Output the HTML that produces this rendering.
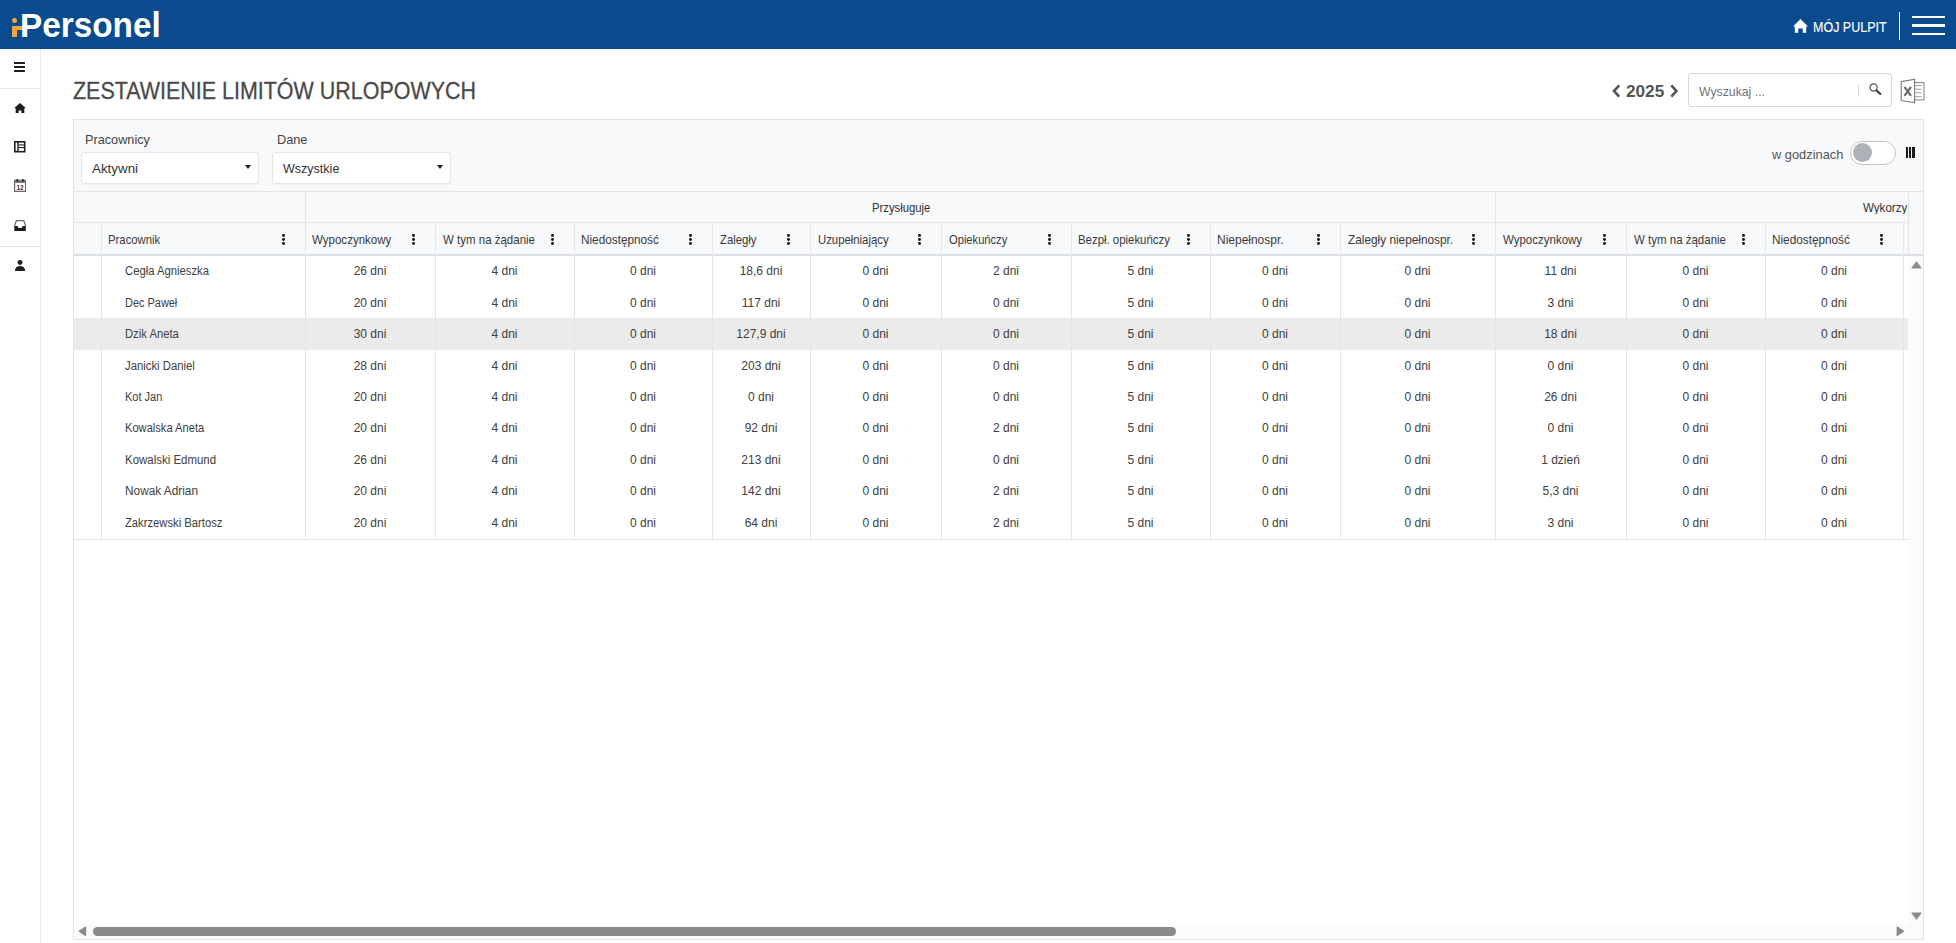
<!DOCTYPE html><html><head><meta charset="utf-8"><style>
*{margin:0;padding:0;box-sizing:border-box}
html,body{width:1956px;height:943px;overflow:hidden;background:#fff;font-family:"Liberation Sans",sans-serif;position:relative}
.a{position:absolute}
.t{position:absolute;white-space:nowrap;line-height:1;transform-origin:0 0}
.c{position:absolute;white-space:nowrap;line-height:1;text-align:center;font-size:12px;color:#404040}
.hl{position:absolute;height:1px;background:#e3e5e8}
.vl{position:absolute;width:1px;background:#e3e5e8}
.kb{position:absolute;width:3px;height:11px}
.kb i{position:absolute;left:0;width:2.8px;height:2.8px;border-radius:50%;background:#181818}

</style></head><body>
<div class="a" style="left:0;top:0;width:1956px;height:48.5px;background:#0a4a8e"></div>
<div class="a" style="left:12.3px;top:18.3px;width:5px;height:5px;border-radius:50%;background:#f0a540"></div>
<div class="a" style="left:12px;top:26px;width:5.2px;height:10.8px;background:#f0a540"></div>
<div class="a" style="left:12px;top:26px;width:10.5px;height:4.4px;background:#f0a540"></div>
<div class="t" id="logo" style="left:20.15px;top:9.70px;font-size:32.5px;font-weight:bold;color:#fff;transform:scaleX(1.0251);">P<span style="display:inline-block;transform:scaleY(1.08);transform-origin:50% 27.5px">ersonel</span></div>
<svg class="a" style="left:1793px;top:19px" width="15" height="14" viewBox="0 0 15 14"><path d="M7.5 0 L15 7.4 L13.2 7.4 L13.2 13.8 L9.8 13.8 L9.8 9.5 L5.2 9.5 L5.2 13.8 L1.8 13.8 L1.8 7.4 L0 7.4 Z" fill="#fff"/></svg>
<div class="t" id="pulpit" style="left:1812.69px;top:18.51px;font-size:15.4px;color:#fff;transform:scaleX(0.8122);-webkit-text-stroke:0.15px #fff;">MÓJ PULPIT</div>
<div class="a" style="left:1899px;top:12px;width:1.2px;height:28px;background:#fff"></div>
<div class="a" style="left:1912.3px;top:16.2px;width:32.5px;height:2.3px;background:#fff"></div>
<div class="a" style="left:1912.3px;top:24.4px;width:32.5px;height:2.3px;background:#fff"></div>
<div class="a" style="left:1912.3px;top:32.5px;width:32.5px;height:2.3px;background:#fff"></div>
<div class="a" style="left:39.5px;top:48.5px;width:1.2px;height:895px;background:#e8e8e8"></div>
<div class="a" style="left:0;top:88px;width:40px;height:1px;background:#e8e8e8"></div>
<div class="a" style="left:0;top:246px;width:40px;height:1px;background:#e8e8e8"></div>
<div class="a" style="left:14px;top:61.7px;width:11.3px;height:2.4px;background:#1e1e1e;border-radius:0.5px"></div>
<div class="a" style="left:14px;top:65.8px;width:11.3px;height:2.4px;background:#1e1e1e;border-radius:0.5px"></div>
<div class="a" style="left:14px;top:69.9px;width:11.3px;height:2.4px;background:#1e1e1e;border-radius:0.5px"></div>
<svg class="a" style="left:13.5px;top:102.5px" width="12" height="10.5" viewBox="0 0 12 10.5"><path d="M6 0 L12 5.3 L10.3 5.3 L10.3 10.5 L7.3 10.5 L7.3 7.6 L4.7 7.6 L4.7 10.5 L1.7 10.5 L1.7 5.3 L0 5.3 Z" fill="#1e1e1e"/></svg>
<svg class="a" style="left:14px;top:141.3px" width="11.5" height="11.5" viewBox="0 0 11.5 11.5"><rect x="0.8" y="0.8" width="9.9" height="9.9" fill="none" stroke="#1e1e1e" stroke-width="1.6"/><rect x="3.3" y="0.8" width="1.4" height="10" fill="#1e1e1e"/><rect x="4.5" y="3.4" width="6" height="1.1" fill="#1e1e1e"/><rect x="4.5" y="6" width="6" height="1.1" fill="#1e1e1e"/></svg>
<svg class="a" style="left:13.8px;top:179px" width="12.2" height="13" viewBox="0 0 12.2 13"><rect x="0.6" y="1.4" width="11" height="11" fill="none" stroke="#666" stroke-width="1.2"/><rect x="0.6" y="1.4" width="11" height="2.6" fill="#777"/><rect x="2.3" y="0" width="1.9" height="2.6" rx="0.9" fill="#222"/><rect x="8" y="0" width="1.9" height="2.6" rx="0.9" fill="#222"/><rect x="1.2" y="4" width="9.8" height="0.8" fill="#fff"/><text x="6.1" y="10.8" font-size="6.5" font-weight="bold" text-anchor="middle" fill="#333" font-family="Liberation Sans">12</text></svg>
<svg class="a" style="left:13.8px;top:219.5px" width="12.2" height="11.8" viewBox="0 0 12.2 11.8"><path d="M2.3 0.7 L9.9 0.7 L11.5 5.5 L11.5 11.2 L0.7 11.2 L0.7 5.5 Z" fill="none" stroke="#6a6a6a" stroke-width="1.2" stroke-linejoin="round"/><path d="M0.7 6 L3.4 6 L4.6 8 L7.6 8 L8.8 6 L11.5 6 L11.5 11.8 L0.7 11.8 Z" fill="#1c1c1c"/></svg>
<svg class="a" style="left:14.6px;top:259.6px" width="10.2" height="11.3" viewBox="0 0 10.2 11.3"><circle cx="5.1" cy="2.5" r="2.5" fill="#1e1e1e"/><path d="M0 11.3 Q0 5.9 5.1 5.9 Q10.2 5.9 10.2 11.3 Z" fill="#1e1e1e"/></svg>
<div class="t" id="title" style="left:73.30px;top:79.81px;font-size:23.6px;color:#4a4a4a;transform:scaleX(0.9095);-webkit-text-stroke:0.3px #4a4a4a;">ZESTAWIENIE LIMITÓW URLOPOWYCH</div>
<svg class="a" style="left:1610.5px;top:83.5px" width="10.5" height="14" viewBox="0 0 10.5 14"><path d="M8.2 1.3 L3 7 L8.2 12.7" fill="none" stroke="#555" stroke-width="2.6"/></svg>
<div class="t" id="year" style="left:1625.80px;top:83.71px;font-size:16.8px;font-weight:bold;color:#555;transform:scaleX(1.0244);">2025</div>
<svg class="a" style="left:1668.5px;top:83.5px" width="10.5" height="14" viewBox="0 0 10.5 14"><path d="M2.3 1.3 L7.5 7 L2.3 12.7" fill="none" stroke="#555" stroke-width="2.6"/></svg>
<div class="a" style="left:1688.3px;top:73px;width:203.3px;height:33.8px;border:1px solid #d6d6d6;border-radius:3.5px;background:#fff"></div>
<div class="t" id="search" style="left:1698.90px;top:85.20px;font-size:13.4px;color:#6f7479;transform:scaleX(0.9154);">Wyszukaj ...</div>
<div class="a" style="left:1858px;top:84px;width:1px;height:12.5px;background:#dcdcdc"></div>
<svg class="a" style="left:1869px;top:83px" width="13" height="12" viewBox="0 0 13 12"><circle cx="4.6" cy="4.5" r="3.6" fill="none" stroke="#555" stroke-width="1.2"/><path d="M7.3 7.3 L11.4 10.9" stroke="#333" stroke-width="2" stroke-linecap="round"/></svg>
<svg class="a" style="left:1899.5px;top:77.5px" width="25" height="26" viewBox="0 0 25 26"><path d="M1.2 3.6 L14.6 1.2 L14.6 24.8 L1.2 22.5 Z" fill="#fff" stroke="#777" stroke-width="1.1" stroke-linejoin="round"/><path d="M14.6 4.6 H24 V21.9 H14.6" fill="none" stroke="#7a7a7a" stroke-width="1"/><path d="M15.2 7.6 H21.6 M15.2 11.2 H21.6 M15.2 14.7 H21.6 M15.2 18.7 H21.6" stroke="#888" stroke-width="0.8"/><path d="M4.4 8.8 L11 17.8 M11 8.8 L4.4 17.8" stroke="#6a6a6a" stroke-width="2.1"/></svg>
<div class="a" style="left:73px;top:119px;width:1851px;height:821px;border:1px solid #e3e4e6;background:#fff"></div>
<div class="a" style="left:74px;top:924px;width:1834px;height:15px;background:#fbfbfb"></div>
<div class="a" style="left:1908px;top:255px;width:15px;height:684px;background:#fbfbfb"></div>
<div class="a" style="left:74px;top:120px;width:1849px;height:71px;background:#f8f9fa"></div>
<div class="t" id="lab1" style="left:84.71px;top:133.91px;font-size:12.9px;color:#444;transform:scaleX(0.9853);">Pracownicy</div>
<div class="t" id="lab2" style="left:276.81px;top:133.91px;font-size:12.9px;color:#444;transform:scaleX(0.9883);">Dane</div>
<div class="a" style="left:81px;top:152.4px;width:178px;height:31.4px;border:1px solid #e6e6e6;border-radius:3px;background:#fff;box-shadow:0 0.5px 1px rgba(0,0,0,0.04)"></div>
<div class="t" id="sel1" style="left:91.90px;top:163.11px;font-size:12.9px;color:#333;transform:scaleX(1.0379);">Aktywni</div>
<div class="a" style="left:244.7px;top:165.2px;width:0;height:0;border-left:3.2px solid transparent;border-right:3.2px solid transparent;border-top:4.8px solid #1e1e1e"></div>
<div class="a" style="left:272.4px;top:152.4px;width:178.2px;height:31.4px;border:1px solid #e6e6e6;border-radius:3px;background:#fff;box-shadow:0 0.5px 1px rgba(0,0,0,0.04)"></div>
<div class="t" id="sel2" style="left:283.30px;top:163.11px;font-size:12.9px;color:#333;transform:scaleX(0.9717);">Wszystkie</div>
<div class="a" style="left:436.6px;top:165.2px;width:0;height:0;border-left:3.2px solid transparent;border-right:3.2px solid transparent;border-top:4.8px solid #1e1e1e"></div>
<div class="t" id="wgodz" style="left:1772.30px;top:149.00px;font-size:12.9px;color:#555;transform:scaleX(0.9960);">w godzinach</div>
<div class="a" style="left:1850.2px;top:140.8px;width:45.6px;height:24px;border:1px solid #c5c5c5;border-radius:12px;background:#fff"></div>
<div class="a" style="left:1852.7px;top:143.3px;width:19px;height:19px;border-radius:50%;background:#adb2b9"></div>
<div class="a" style="left:1905.6px;top:146.5px;width:2.4px;height:11.2px;background:#1a1a1a"></div>
<div class="a" style="left:1909px;top:146.5px;width:2.4px;height:11.2px;background:#1a1a1a"></div>
<div class="a" style="left:1912.4px;top:146.5px;width:2.4px;height:11.2px;background:#1a1a1a"></div>
<div class="a" style="left:74px;top:318px;width:1834px;height:31.5px;background:#ebebeb"></div>
<div class="a" style="left:74px;top:191px;width:1849px;height:64px;background:#f8f9fa"></div>
<div class="hl" style="left:74px;top:191px;width:1849px"></div>
<div class="hl" style="left:74px;top:222px;width:1834px"></div>
<div class="a" style="left:74px;top:254px;width:1849px;height:1.6px;background:#dcdfe2"></div>
<div class="vl" style="left:1908px;top:191px;height:64px"></div>
<div class="vl" style="left:305px;top:191px;height:31px"></div>
<div class="vl" style="left:1495px;top:191px;height:31px"></div>
<div class="t" id="grp1" style="left:871.60px;top:201.82px;font-size:12px;color:#333;transform:scaleX(0.9398);">Przysługuje</div>
<div class="t" id="grp2" style="left:1863.00px;top:201.82px;font-size:12px;color:#333;transform:scaleX(0.9650);width:45.80px;overflow:hidden;">Wykorzystane</div>
<div class="vl" style="left:101px;top:222px;height:317px"></div>
<div class="t" id="h0" style="left:108.09px;top:233.91px;font-size:12.4px;color:#3a3a3a;transform:scaleX(0.9147);">Pracownik</div>
<div class="kb" style="left:281.8px;top:234px"><i style="top:0"></i><i style="top:4.1px"></i><i style="top:8.2px"></i></div>
<div class="vl" style="left:305px;top:222px;height:317px"></div>
<div class="t" id="h1" style="left:312.30px;top:233.91px;font-size:12.4px;color:#3a3a3a;transform:scaleX(0.9306);">Wypoczynkowy</div>
<div class="kb" style="left:412.3px;top:234px"><i style="top:0"></i><i style="top:4.1px"></i><i style="top:8.2px"></i></div>
<div class="vl" style="left:435px;top:222px;height:317px"></div>
<div class="t" id="h2" style="left:443.00px;top:233.91px;font-size:12.4px;color:#3a3a3a;transform:scaleX(0.9277);">W tym na żądanie</div>
<div class="kb" style="left:551.3000000000001px;top:234px"><i style="top:0"></i><i style="top:4.1px"></i><i style="top:8.2px"></i></div>
<div class="vl" style="left:574px;top:222px;height:317px"></div>
<div class="t" id="h3" style="left:580.85px;top:233.91px;font-size:12.4px;color:#3a3a3a;transform:scaleX(0.9496);">Niedostępność</div>
<div class="kb" style="left:689.3000000000001px;top:234px"><i style="top:0"></i><i style="top:4.1px"></i><i style="top:8.2px"></i></div>
<div class="vl" style="left:712px;top:222px;height:317px"></div>
<div class="t" id="h4" style="left:720.00px;top:233.91px;font-size:12.4px;color:#3a3a3a;transform:scaleX(0.9129);">Zaległy</div>
<div class="kb" style="left:787.3000000000001px;top:234px"><i style="top:0"></i><i style="top:4.1px"></i><i style="top:8.2px"></i></div>
<div class="vl" style="left:810px;top:222px;height:317px"></div>
<div class="t" id="h5" style="left:818.10px;top:233.91px;font-size:12.4px;color:#3a3a3a;transform:scaleX(0.9148);">Uzupełniający</div>
<div class="kb" style="left:918.3000000000001px;top:234px"><i style="top:0"></i><i style="top:4.1px"></i><i style="top:8.2px"></i></div>
<div class="vl" style="left:941px;top:222px;height:317px"></div>
<div class="t" id="h6" style="left:948.50px;top:233.91px;font-size:12.4px;color:#3a3a3a;transform:scaleX(0.9002);">Opiekuńczy</div>
<div class="kb" style="left:1048.3px;top:234px"><i style="top:0"></i><i style="top:4.1px"></i><i style="top:8.2px"></i></div>
<div class="vl" style="left:1071px;top:222px;height:317px"></div>
<div class="t" id="h7" style="left:1078.28px;top:233.91px;font-size:12.4px;color:#3a3a3a;transform:scaleX(0.9200);">Bezpł. opiekuńczy</div>
<div class="kb" style="left:1187.3px;top:234px"><i style="top:0"></i><i style="top:4.1px"></i><i style="top:8.2px"></i></div>
<div class="vl" style="left:1210px;top:222px;height:317px"></div>
<div class="t" id="h8" style="left:1217.03px;top:233.91px;font-size:12.4px;color:#3a3a3a;transform:scaleX(0.9668);">Niepełnospr.</div>
<div class="kb" style="left:1317.3px;top:234px"><i style="top:0"></i><i style="top:4.1px"></i><i style="top:8.2px"></i></div>
<div class="vl" style="left:1340px;top:222px;height:317px"></div>
<div class="t" id="h9" style="left:1348.00px;top:233.91px;font-size:12.4px;color:#3a3a3a;transform:scaleX(0.9538);">Zaległy niepełnospr.</div>
<div class="kb" style="left:1472.3px;top:234px"><i style="top:0"></i><i style="top:4.1px"></i><i style="top:8.2px"></i></div>
<div class="vl" style="left:1495px;top:222px;height:317px"></div>
<div class="t" id="h10" style="left:1503.30px;top:233.91px;font-size:12.4px;color:#3a3a3a;transform:scaleX(0.9271);">Wypoczynkowy</div>
<div class="kb" style="left:1603.3px;top:234px"><i style="top:0"></i><i style="top:4.1px"></i><i style="top:8.2px"></i></div>
<div class="vl" style="left:1626px;top:222px;height:317px"></div>
<div class="t" id="h11" style="left:1633.80px;top:233.91px;font-size:12.4px;color:#3a3a3a;transform:scaleX(0.9277);">W tym na żądanie</div>
<div class="kb" style="left:1742.3px;top:234px"><i style="top:0"></i><i style="top:4.1px"></i><i style="top:8.2px"></i></div>
<div class="vl" style="left:1765px;top:222px;height:317px"></div>
<div class="t" id="h12" style="left:1771.65px;top:233.91px;font-size:12.4px;color:#3a3a3a;transform:scaleX(0.9496);">Niedostępność</div>
<div class="kb" style="left:1880.3px;top:234px"><i style="top:0"></i><i style="top:4.1px"></i><i style="top:8.2px"></i></div>
<div class="vl" style="left:1903px;top:222px;height:317px"></div>
<div class="t" id="tx25" style="left:124.80px;top:265.10px;font-size:12px;color:#404040;transform:scaleX(0.9394);">Cegła Agnieszka</div>
<div class="c" style="left:305px;width:130px;top:265.11px">26 dni</div>
<div class="c" style="left:435px;width:139px;top:265.11px">4 dni</div>
<div class="c" style="left:574px;width:138px;top:265.11px">0 dni</div>
<div class="c" style="left:712px;width:98px;top:265.11px">18,6 dni</div>
<div class="c" style="left:810px;width:131px;top:265.11px">0 dni</div>
<div class="c" style="left:941px;width:130px;top:265.11px">2 dni</div>
<div class="c" style="left:1071px;width:139px;top:265.11px">5 dni</div>
<div class="c" style="left:1210px;width:130px;top:265.11px">0 dni</div>
<div class="c" style="left:1340px;width:155px;top:265.11px">0 dni</div>
<div class="c" style="left:1495px;width:131px;top:265.11px">11 dni</div>
<div class="c" style="left:1626px;width:139px;top:265.11px">0 dni</div>
<div class="c" style="left:1765px;width:138px;top:265.11px">0 dni</div>
<div class="t" id="tx26" style="left:124.80px;top:296.58px;font-size:12px;color:#404040;transform:scaleX(0.9117);">Dec Paweł</div>
<div class="c" style="left:305px;width:130px;top:296.58px">20 dni</div>
<div class="c" style="left:435px;width:139px;top:296.58px">4 dni</div>
<div class="c" style="left:574px;width:138px;top:296.58px">0 dni</div>
<div class="c" style="left:712px;width:98px;top:296.58px">117 dni</div>
<div class="c" style="left:810px;width:131px;top:296.58px">0 dni</div>
<div class="c" style="left:941px;width:130px;top:296.58px">0 dni</div>
<div class="c" style="left:1071px;width:139px;top:296.58px">5 dni</div>
<div class="c" style="left:1210px;width:130px;top:296.58px">0 dni</div>
<div class="c" style="left:1340px;width:155px;top:296.58px">0 dni</div>
<div class="c" style="left:1495px;width:131px;top:296.58px">3 dni</div>
<div class="c" style="left:1626px;width:139px;top:296.58px">0 dni</div>
<div class="c" style="left:1765px;width:138px;top:296.58px">0 dni</div>
<div class="t" id="tx27" style="left:124.80px;top:328.05px;font-size:12px;color:#404040;transform:scaleX(0.9374);">Dzik Aneta</div>
<div class="c" style="left:305px;width:130px;top:328.05px">30 dni</div>
<div class="c" style="left:435px;width:139px;top:328.05px">4 dni</div>
<div class="c" style="left:574px;width:138px;top:328.05px">0 dni</div>
<div class="c" style="left:712px;width:98px;top:328.05px">127,9 dni</div>
<div class="c" style="left:810px;width:131px;top:328.05px">0 dni</div>
<div class="c" style="left:941px;width:130px;top:328.05px">0 dni</div>
<div class="c" style="left:1071px;width:139px;top:328.05px">5 dni</div>
<div class="c" style="left:1210px;width:130px;top:328.05px">0 dni</div>
<div class="c" style="left:1340px;width:155px;top:328.05px">0 dni</div>
<div class="c" style="left:1495px;width:131px;top:328.05px">18 dni</div>
<div class="c" style="left:1626px;width:139px;top:328.05px">0 dni</div>
<div class="c" style="left:1765px;width:138px;top:328.05px">0 dni</div>
<div class="t" id="tx28" style="left:124.80px;top:359.52px;font-size:12px;color:#404040;transform:scaleX(0.9432);">Janicki Daniel</div>
<div class="c" style="left:305px;width:130px;top:359.52px">28 dni</div>
<div class="c" style="left:435px;width:139px;top:359.52px">4 dni</div>
<div class="c" style="left:574px;width:138px;top:359.52px">0 dni</div>
<div class="c" style="left:712px;width:98px;top:359.52px">203 dni</div>
<div class="c" style="left:810px;width:131px;top:359.52px">0 dni</div>
<div class="c" style="left:941px;width:130px;top:359.52px">0 dni</div>
<div class="c" style="left:1071px;width:139px;top:359.52px">5 dni</div>
<div class="c" style="left:1210px;width:130px;top:359.52px">0 dni</div>
<div class="c" style="left:1340px;width:155px;top:359.52px">0 dni</div>
<div class="c" style="left:1495px;width:131px;top:359.52px">0 dni</div>
<div class="c" style="left:1626px;width:139px;top:359.52px">0 dni</div>
<div class="c" style="left:1765px;width:138px;top:359.52px">0 dni</div>
<div class="t" id="tx29" style="left:124.80px;top:390.99px;font-size:12px;color:#404040;transform:scaleX(0.9171);">Kot Jan</div>
<div class="c" style="left:305px;width:130px;top:390.99px">20 dni</div>
<div class="c" style="left:435px;width:139px;top:390.99px">4 dni</div>
<div class="c" style="left:574px;width:138px;top:390.99px">0 dni</div>
<div class="c" style="left:712px;width:98px;top:390.99px">0 dni</div>
<div class="c" style="left:810px;width:131px;top:390.99px">0 dni</div>
<div class="c" style="left:941px;width:130px;top:390.99px">0 dni</div>
<div class="c" style="left:1071px;width:139px;top:390.99px">5 dni</div>
<div class="c" style="left:1210px;width:130px;top:390.99px">0 dni</div>
<div class="c" style="left:1340px;width:155px;top:390.99px">0 dni</div>
<div class="c" style="left:1495px;width:131px;top:390.99px">26 dni</div>
<div class="c" style="left:1626px;width:139px;top:390.99px">0 dni</div>
<div class="c" style="left:1765px;width:138px;top:390.99px">0 dni</div>
<div class="t" id="tx30" style="left:124.80px;top:422.46px;font-size:12px;color:#404040;transform:scaleX(0.9273);">Kowalska Aneta</div>
<div class="c" style="left:305px;width:130px;top:422.46px">20 dni</div>
<div class="c" style="left:435px;width:139px;top:422.46px">4 dni</div>
<div class="c" style="left:574px;width:138px;top:422.46px">0 dni</div>
<div class="c" style="left:712px;width:98px;top:422.46px">92 dni</div>
<div class="c" style="left:810px;width:131px;top:422.46px">0 dni</div>
<div class="c" style="left:941px;width:130px;top:422.46px">2 dni</div>
<div class="c" style="left:1071px;width:139px;top:422.46px">5 dni</div>
<div class="c" style="left:1210px;width:130px;top:422.46px">0 dni</div>
<div class="c" style="left:1340px;width:155px;top:422.46px">0 dni</div>
<div class="c" style="left:1495px;width:131px;top:422.46px">0 dni</div>
<div class="c" style="left:1626px;width:139px;top:422.46px">0 dni</div>
<div class="c" style="left:1765px;width:138px;top:422.46px">0 dni</div>
<div class="t" id="tx31" style="left:124.80px;top:453.93px;font-size:12px;color:#404040;transform:scaleX(0.9545);">Kowalski Edmund</div>
<div class="c" style="left:305px;width:130px;top:453.93px">26 dni</div>
<div class="c" style="left:435px;width:139px;top:453.93px">4 dni</div>
<div class="c" style="left:574px;width:138px;top:453.93px">0 dni</div>
<div class="c" style="left:712px;width:98px;top:453.93px">213 dni</div>
<div class="c" style="left:810px;width:131px;top:453.93px">0 dni</div>
<div class="c" style="left:941px;width:130px;top:453.93px">0 dni</div>
<div class="c" style="left:1071px;width:139px;top:453.93px">5 dni</div>
<div class="c" style="left:1210px;width:130px;top:453.93px">0 dni</div>
<div class="c" style="left:1340px;width:155px;top:453.93px">0 dni</div>
<div class="c" style="left:1495px;width:131px;top:453.93px">1 dzień</div>
<div class="c" style="left:1626px;width:139px;top:453.93px">0 dni</div>
<div class="c" style="left:1765px;width:138px;top:453.93px">0 dni</div>
<div class="t" id="tx32" style="left:124.80px;top:485.40px;font-size:12px;color:#404040;transform:scaleX(0.9861);">Nowak Adrian</div>
<div class="c" style="left:305px;width:130px;top:485.40px">20 dni</div>
<div class="c" style="left:435px;width:139px;top:485.40px">4 dni</div>
<div class="c" style="left:574px;width:138px;top:485.40px">0 dni</div>
<div class="c" style="left:712px;width:98px;top:485.40px">142 dni</div>
<div class="c" style="left:810px;width:131px;top:485.40px">0 dni</div>
<div class="c" style="left:941px;width:130px;top:485.40px">2 dni</div>
<div class="c" style="left:1071px;width:139px;top:485.40px">5 dni</div>
<div class="c" style="left:1210px;width:130px;top:485.40px">0 dni</div>
<div class="c" style="left:1340px;width:155px;top:485.40px">0 dni</div>
<div class="c" style="left:1495px;width:131px;top:485.40px">5,3 dni</div>
<div class="c" style="left:1626px;width:139px;top:485.40px">0 dni</div>
<div class="c" style="left:1765px;width:138px;top:485.40px">0 dni</div>
<div class="t" id="tx33" style="left:124.80px;top:516.87px;font-size:12px;color:#404040;transform:scaleX(0.9363);">Zakrzewski Bartosz</div>
<div class="c" style="left:305px;width:130px;top:516.87px">20 dni</div>
<div class="c" style="left:435px;width:139px;top:516.87px">4 dni</div>
<div class="c" style="left:574px;width:138px;top:516.87px">0 dni</div>
<div class="c" style="left:712px;width:98px;top:516.87px">64 dni</div>
<div class="c" style="left:810px;width:131px;top:516.87px">0 dni</div>
<div class="c" style="left:941px;width:130px;top:516.87px">2 dni</div>
<div class="c" style="left:1071px;width:139px;top:516.87px">5 dni</div>
<div class="c" style="left:1210px;width:130px;top:516.87px">0 dni</div>
<div class="c" style="left:1340px;width:155px;top:516.87px">0 dni</div>
<div class="c" style="left:1495px;width:131px;top:516.87px">3 dni</div>
<div class="c" style="left:1626px;width:139px;top:516.87px">0 dni</div>
<div class="c" style="left:1765px;width:138px;top:516.87px">0 dni</div>
<div class="hl" style="left:74px;top:539px;width:1834px"></div>
<svg class="a" style="left:1910.5px;top:260.5px" width="11" height="8" viewBox="0 0 11 8"><path d="M5.5 1 L10 7 L1 7 Z" fill="#8a8a8a" stroke="#8a8a8a" stroke-width="1.2" stroke-linejoin="round"/></svg>
<svg class="a" style="left:1910.5px;top:911.5px" width="11" height="8" viewBox="0 0 11 8"><path d="M1 1 L10 1 L5.5 7 Z" fill="#8a8a8a" stroke="#8a8a8a" stroke-width="1.2" stroke-linejoin="round"/></svg>
<svg class="a" style="left:78px;top:926px" width="9" height="10.5" viewBox="0 0 9 10.5"><path d="M1.2 5.25 L7.6 1 L7.6 9.5 Z" fill="#8a8a8a" stroke="#8a8a8a" stroke-width="1.2" stroke-linejoin="round"/></svg>
<svg class="a" style="left:1895.5px;top:926px" width="9" height="10.5" viewBox="0 0 9 10.5"><path d="M7.6 5.25 L1.2 1 L1.2 9.5 Z" fill="#8a8a8a" stroke="#8a8a8a" stroke-width="1.2" stroke-linejoin="round"/></svg>
<div class="a" style="left:92.5px;top:926.5px;width:1083px;height:9px;border-radius:4.5px;background:#8a8a8a"></div>
</body></html>
